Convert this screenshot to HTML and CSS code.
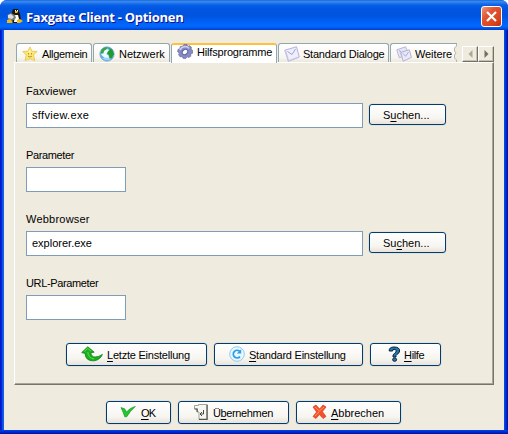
FILE: index.html
```html
<!DOCTYPE html>
<html lang="de">
<head>
<meta charset="utf-8">
<title>Faxgate Client - Optionen</title>
<link rel="stylesheet" href="styles.css">
</head>
<body>
<div class="window">
  <header class="titlebar">
    <svg class="app-icon" width="16" height="16" viewBox="0 0 16 16">
      <path d="M6 1h5l2 5 1 6-3 3H5L3 11z" fill="#17150e"/>
      <path d="M8 7h3l1 4-2 3H7z" fill="#fff"/>
      <path d="M.5 7l3.5-2 4 2 1 3-4 3-4-2z" fill="#777d73"/>
      <path d="M1 7l3-1 3 3-2 2-4-1z" fill="#ddd"/>
      <path d="M8 3h3v1l-1 1H8zM0 12l3-1 3 3-1 1H0zM10 12l3-1 3 2-3 2h-3z" fill="#f2b914"/>
      <path d="M8 2h1v1H8zM10 2h1v1h-1z" fill="#fff"/>
    </svg>
    <span class="title">Faxgate Client - Optionen</span>
    <span class="close"><svg width="19" height="19" viewBox="0 0 19 19"><path d="M5 5l9 9M14 5l-9 9" stroke="#fff" stroke-width="2.2"/></svg></span>
  </header>
  <main class="content">
    <div class="tabs">
      <div class="tab t-allgemein">
        <svg width="16" height="16" viewBox="0 0 16 16"><path d="M8 1l2 4.3 5 .2-3.5 3.5 1.4 5.5L8 12.8l-4.9 1.7L4.3 9 .8 5.5l5-.2z" fill="#fbe76e" stroke="#eccb5c" stroke-linejoin="round"/><path d="M8 3l1 3.5H6.5z" fill="#fff8b8"/><path d="M6.5 7v1.5M9.5 7v1.5M6 10.2q2 1.6 4 0" fill="none" stroke="#a88a40" stroke-width=".9"/></svg>
        <span class="n30">Allgemein</span>
      </div>
      <div class="tab t-netzwerk">
        <svg width="16" height="16" viewBox="0 0 16 16"><circle cx="8" cy="8" r="7.2" fill="#62aee6" stroke="#6fa9cc" stroke-width=".7"/><path d="M2.5 3.5Q5 .8 8.500 1.200L7.500 3.500 5.500 4.500 4.500 7 1.500 7.500z" fill="#35a545"/><path d="M9 1.500l4.200 2L15 8l-2.500 4.500-2-.5-.5-3-2-1.500L9 5l2-1z" fill="#219b2f"/><path d="M5 5l3-2 2 1-1.500 2L7.500 8l2 1.500.5 3L7 13 3 9.500 2 8l2.500-.5z" fill="#eef9fd"/><path d="M3 12q4.500 4 9 1l-4-1.500z" fill="#9bd8f8"/></svg>
        <span>Netzwerk</span>
      </div>
      <div class="tab active t-hilfs">
        <svg width="16" height="16" viewBox="0 0 16 16"><path d="M6 2l1-1.500 3 .1.8 1.800 2-.7 1.700 1.800-.6 1.800 1.800 1-.2 3-1.900.7.2 2.200-2.300 1.300-1.500-.9-1.200 1.900-2.800-.2-.7-1.800-2.200.3-1.500-2.100.8-1.700L.6 7.800l.5-2.500 1.800-.4.2-2.200z" fill="#8589c4" stroke="#686b9f" stroke-width=".7"/><path d="M3 6q1-3 5-3.500 3 0 4 2" fill="none" stroke="#cacdec" stroke-width="1.6"/><ellipse cx="8" cy="8" rx="3" ry="2.4" fill="#fff" stroke="#6367a4" transform="rotate(-35 8 8)"/></svg>
        <span class="n18">Hilfsprogramme</span>
      </div>
      <div class="tab t-standard">
        <svg width="16" height="16" viewBox="0 0 16 16"><path d="M.8 4.200L12.500.8l2.800 10.300-11 4.200z" fill="#eeeefc" stroke="#b3b2dc"/><path d="M3.500 5.500L8 8.500l3.500-5.500" fill="none" stroke="#a4a3cc"/><path d="M1.500 4.500l3.200 10.200 10-3.800" fill="none" stroke="#c8c7e6"/></svg>
        <span class="n22">Standard Dialoge</span>
      </div>
      <div class="tab t-weitere">
        <svg width="16" height="16" viewBox="0 0 16 16"><path d="M.8 3.800L9.500.8l1.800 3.800-6.500 2L5.800 11l-2.600.8z" fill="#e5e5f5" stroke="#b7b8d6"/><path d="M4.800 6.500l8.600-2.700 2 7.600-8.200 3.800z" fill="#e9e9f9" stroke="#b3b3d5"/><path d="M7 7.500l2.600 2.800L12.500 6M3 4.600l2 1" fill="none" stroke="#acacd0"/></svg>
        <span class="n10">Weitere</span>
        <svg class="tear" width="5" height="18" viewBox="0 0 5 18"><path d="M4 0h1v18H4V16L2 14V11l2-2-2-2V4l2-2z" fill="#efebde"/><path d="M4.500 0v2l-2 2v3l1.500 2-1.500 2v3l2 2v2" fill="none" stroke="#aca899" stroke-width=".8"/></svg>
      </div>
      <div class="scroller">
        <span class="arrow"><svg width="5" height="8" viewBox="0 0 5 8"><path d="M4.500 0v8L.5 4z" fill="#aca899"/></svg></span>
        <span class="arrow"><svg width="5" height="8" viewBox="0 0 5 8"><path d="M.5 0v8l4-4z" fill="#716f64"/></svg></span>
      </div>
    </div>
    <section class="panel">
      <div class="field">
        <label class="n05">Faxviewer</label>
        <div class="row"><div class="input wide p33">sffview.exe</div><div class="button small"><span>S<u>u</u>chen...</span></div></div>
      </div>
      <div class="field">
        <label class="n35">Parameter</label>
        <div class="row"><div class="input short"></div></div>
      </div>
      <div class="field">
        <label class="p20">Webbrowser</label>
        <div class="row"><div class="input wide">explorer.exe</div><div class="button small"><span>Su<u>c</u>hen...</span></div></div>
      </div>
      <div class="field">
        <label class="n35">URL-Parameter</label>
        <div class="row"><div class="input short"></div></div>
      </div>
      <div class="actions">
        <div class="button b-letzte">
          <svg width="22" height="16" viewBox="0 0 22 16"><path d="M.7 6.600L6.800.8l6.400 5.400-3.400.4q.6 4.600 4.400 4.400 3.600 0 7.200-2.600-1.800 5-8 6.400-9 .6-9.300-7.400z" fill="#1cb01e" stroke="#0b7f16" stroke-width=".8"/><path d="M3.200 5.600l3.600-3.200 3 2.500M6.800 6q.4 6 6.200 7" fill="none" stroke="#5ce04c"/></svg>
          <span class="n22"><u>L</u>etzte Einstellung</span>
        </div>
        <div class="button b-standard">
          <svg width="16" height="16" viewBox="0 0 16 16"><circle cx="8" cy="8" r="7.3" fill="#eaf7ff" stroke="#90caf2" stroke-width="1"/><path d="M11 10.600A3.800 3.800 0 1 1 10.600 5.200" fill="none" stroke="#299ee9" stroke-width="1.8"/><path d="M12.200 3.200v4.400H7.800z" fill="#299ee9"/></svg>
          <span class="n25"><u>S</u>tandard Einstellung</span>
        </div>
        <div class="button b-hilfe">
          <svg width="13" height="16" viewBox="0 0 13 16"><path d="M1.200 5Q1 1 6 1q5.800 0 5.600 4 0 2-2.600 3.400Q7.500 9.300 8 11H5Q4.400 8.700 6.700 7.200 8.400 6 8.200 4.800 8 3.200 6 3.300 4.500 3.400 4.600 5z" fill="#2379af" stroke="#061e38"/><ellipse cx="6.6" cy="13.6" rx="2" ry="1.7" fill="#2379af" stroke="#061e38"/></svg>
          <span class="n30"><u>H</u>ilfe</span>
        </div>
      </div>
    </section>
    <footer class="footer">
      <div class="button b-ok">
        <svg width="16" height="16" viewBox="0 0 16 16"><path d="M1 3.600l3.600 1.200L6.500 8Q10 3.800 15.300 2.400 10 7 6.700 12.800H4.800Q3.200 8 1 3.600z" fill="#25c730" stroke="#139724" stroke-width=".7"/></svg>
        <span class="n60"><u>O</u>K</span>
      </div>
      <div class="button b-uber">
        <svg width="14" height="16" viewBox="0 0 14 16"><path d="M.5 1.500h4v-1h8.800v15H5V8H3V5H.5z" fill="#f7f7f1" stroke="#a5a49b"/><path d="M13 1v14.300H5M.7 5h2.500v3" fill="none" stroke="#555650" stroke-width="1.2"/><path d="M9.500 6v4H6.500M8 8l-2 2 2 2" fill="none" stroke="#333" stroke-width=".9"/></svg>
        <span class="n35">Ü<u>b</u>ernehmen</span>
      </div>
      <div class="button b-abb">
        <svg width="15" height="16" viewBox="0 0 15 16"><path d="M1 3l3-2 3.600 4L11 1l3 2-3.600 4.600L14 12.500 11 14.500l-3.600-4L4 14.500l-3-2L4.600 8z" fill="#f4512a" stroke="#dc3826" stroke-width=".7"/><path d="M3 3l4.300 4L12 3M7 8l-4 4" fill="none" stroke="#ff9b61"/></svg>
        <span><u>A</u>bbrechen</span>
      </div>
    </footer>
  </main>
</div>
</body>
</html>
```
FILE: styles.css
```css
* { box-sizing: border-box; }
html, body { margin: 0; width: 508px; height: 434px; overflow: hidden; background: #fff; }
body { font: 11px/14px "Liberation Sans", Arial, sans-serif; color: #000; }
svg { display: block; flex: none; }
u { text-decoration: underline; text-decoration-thickness: 1px; text-underline-offset: 2px; text-decoration-skip-ink: none; }
.window { width: 508px; height: 434px; border-radius: 7px 7px 0 0; overflow: hidden; padding: 0 4px; background: linear-gradient(90deg, #0019cf 1px, #0831d9 2px, #166aee 3px, #0855dd 4px, #0855dd 504px, #003de5 505px, #001cbb 507px, #00138c); }
.window::after { content: ""; display: block; height: 4px; margin: 0 -4px; background: linear-gradient(#0046e8, #0036dc 1px, #001cbb 3px, #00138c); }
.titlebar { height: 30px; margin: 0 -4px; padding: 0 6px 0 7px; display: flex; align-items: center; background: linear-gradient(#0958c9 0, #3c8cf5 1px, #2878ed 3px, #0661e6 5px, #0057e3 8px, #0054df 16px, #0061f5 22px, #0069ff 26px, #005af1 28px, #003cc7 30px); }
.app-icon { margin-top: 2px; }
.title { margin: 4px 0 0 3px; font: bold 13px/18px "Open Sans", "Noto Sans", sans-serif; color: #fff; text-shadow: 1px 1px #0f1089; letter-spacing: -.28px; white-space: nowrap; }
.close { margin: 2px 0 0 auto; width: 21px; height: 21px; border: 1px solid #fff; border-radius: 3px; background: linear-gradient(135deg, #ec9680, #e15434 35%, #d9441c 75%, #be2e0b); }
.content { height: 400px; background: #efebde; padding: 13px 10px 0; }
.tabs { height: 19px; padding-left: 2px; display: flex; align-items: flex-start; gap: 1px; }
.tab { height: 19px; border: 1px solid #91a7b4; border-bottom: 0; border-radius: 3px 3px 0 0; background: linear-gradient(#fff, #f8f6f0 75%, #ebe7dc); display: flex; align-items: center; padding: 2px 0 0 5px; white-space: nowrap; }
.tab span { margin-left: 4px; }
.tab.active { height: 20px; border-top: 2px solid #ffc13c; background: #fff; padding: 0 0 0 5px; position: relative; align-items: flex-start; }
.active svg { margin-top: -1px; }
.active span { margin-top: 0; }
.t-allgemein { width: 76px; }
.t-netzwerk { width: 77px; }
.t-hilfs { width: 106px; }
.t-standard { width: 111px; }
.t-weitere { width: 67px; border-right: 0; border-radius: 3px 0 0 0; }
.t-standard span, .t-weitere span { margin-left: 3px; }
.tear { margin: -2px 0 0 auto; }
.scroller { display: flex; margin: 3px 0 0 4px; }
.arrow { width: 16px; height: 16px; border: 1px solid; border-color: #fff #77705f #77705f #fff; box-shadow: inset -1px -1px #c5c1b2; display: flex; align-items: center; justify-content: center; }
.panel { width: 480px; height: 323px; border: 1px solid; border-color: #fff #777567 #777567 #fff; box-shadow: inset -1px -1px #aaa695; padding: 21px 0 0 11px; }
.field { height: 64px; }
.field label { display: block; height: 14px; line-height: 15px; margin-bottom: 5px; }
.row { display: flex; align-items: flex-start; }
.input { height: 25px; border: 1px solid #7f9db9; background: #fff; padding: 0 5px; line-height: 23px; }
.wide { width: 337px; }
.short { width: 100px; }
.button { height: 23px; border: 1px solid #003c74; border-radius: 3px; background: linear-gradient(#fff, #f7f5f0 70%, #e8e3da); box-shadow: 0 0 0 .5px #d9d7cd; display: flex; align-items: center; white-space: nowrap; flex: none; }
.button svg { position: relative; top: -.5px; }
.button span { padding-top: 0; }
.small { width: 77px; height: 21px; margin: 1px 0 0 6px; padding-left: 13px; }
.actions { display: flex; gap: 7px; padding-left: 40px; margin-top: 3px; }
.b-letzte { width: 141px; padding-left: 14px; }
.b-letzte span { margin-left: 4px; }
.b-standard { width: 149px; padding-left: 14px; }
.b-standard span { margin-left: 4px; }
.b-hilfe { width: 71px; padding-left: 17px; }
.b-hilfe span { margin-left: 3px; }
.footer { display: flex; gap: 7px; padding: 16px 0 0 92px; }
.b-ok { width: 65px; padding-left: 13px; }
.b-ok span { margin-left: 5px; }
.b-uber { width: 111px; padding-left: 15px; }
.b-uber span { margin-left: 5px; }
.b-abb { width: 105px; padding-left: 15px; }
.b-abb span { margin-left: 4px; }
.n05 { letter-spacing: .05px; }
.n10 { letter-spacing: -.1px; }
.n18 { letter-spacing: -.18px; }
.n22 { letter-spacing: -.22px; }
.n25 { letter-spacing: -.24px; }
.n30 { letter-spacing: -.33px; }
.n35 { letter-spacing: -.37px; }
.n60 { letter-spacing: -.9px; }
.p20 { letter-spacing: .22px; }
.p33 { letter-spacing: .33px; }
```
